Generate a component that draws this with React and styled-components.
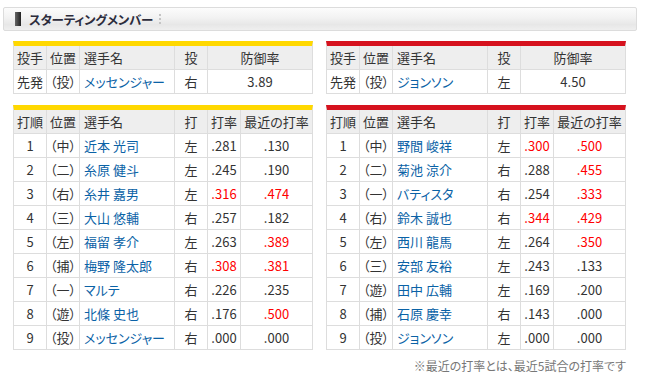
import styled, { createGlobalStyle } from 'styled-components';

const GlobalStyle = createGlobalStyle`
    html, body {
        margin: 0;
        padding: 0;
        background: #fff;
    }
    body {
        font-family: "Noto Sans CJK JP", "Noto Sans", sans-serif;
        font-feature-settings: "palt";
        color: #333;
    }
`;

const Page = styled.div`
    width: 634px;
    padding: 7px 0 0 3px;
`;

const SectionHead = styled.div`
    height: 24px;
    box-sizing: border-box;
    border: 1px solid #dcdcdc;
    border-radius: 2px;
    background: linear-gradient(to bottom, #fcfcfc 0%, #f2f2f2 45%, #e7e7e7 75%, #efefef 100%);
    display: flex;
    align-items: center;
    padding-left: 11px;
`;

const HeadMark = styled.span`
    width: 6px;
    height: 14px;
    background: linear-gradient(to right, #666, #222);
    margin-right: 8px;
`;

const HeadTitle = styled.span`
    font-size: 12.5px;
    font-weight: 700;
    color: #2c2c3c;
    letter-spacing: -0.2px;
`;

const HeadDots = styled.span`
    width: 0;
    height: 10px;
    border-left: 2px dotted #c4c4c4;
    margin-left: 6px;
`;

const Body = styled.div`
    padding: 10px 10px 0 10px;
`;

const Pair = styled.div`
    display: grid;
    grid-template-columns: 300px 300px;
    column-gap: 13px;
    margin-bottom: 11px;
`;

const Table = styled.div`
    border: 1px solid #dddddd;
    border-top: 5px solid ${(p) => (p.$team === 'tigers' ? '#ffd800' : '#d6121e')};
`;

const Row = styled.div`
    display: grid;
    grid-template-columns: ${(p) => p.$cols};
    height: 24px;
    box-sizing: border-box;
    border-bottom: 1px solid #dddddd;
    background: ${(p) => (p.$head ? '#eeeeee' : '#ffffff')};

    &:last-child {
        border-bottom: none;
        height: 23px;
    }
`;

const Cell = styled.div`
    display: flex;
    align-items: center;
    justify-content: ${(p) => (p.$left ? 'flex-start' : 'center')};
    padding-left: ${(p) => (p.$left ? '4px' : '0')};
    border-right: 1px solid #dddddd;
    font-size: 13px;
    white-space: nowrap;
    overflow: hidden;
    color: ${(p) => (p.$red ? '#ff0000' : p.$name ? '#0a62a6' : '#333')};

    &:last-child {
        border-right: none;
    }
`;

const Note = styled.div`
    text-align: right;
    font-size: 12px;
    color: #777;
    margin-top: -4px;
    padding-right: 1px;
`;

const PITCH_COLS = '33px 33px 95px 33px 1fr';
const BAT_COLS = '33px 33px 95px 33px 33px 1fr';

const pitchers = [
    { team: 'tigers', name: 'メッセンジャー', hand: '右', era: '3.89' },
    { team: 'carp', name: 'ジョンソン', hand: '左', era: '4.50' },
];

const lineups = [
    {
        team: 'tigers',
        rows: [
            ['1', '（中）', '近本 光司', '左', '.281', '.130'],
            ['2', '（二）', '糸原 健斗', '左', '.245', '.190'],
            ['3', '（右）', '糸井 嘉男', '左', '.316', '.474'],
            ['4', '（三）', '大山 悠輔', '右', '.257', '.182'],
            ['5', '（左）', '福留 孝介', '左', '.263', '.389'],
            ['6', '（捕）', '梅野 隆太郎', '右', '.308', '.381'],
            ['7', '（一）', 'マルテ', '右', '.226', '.235'],
            ['8', '（遊）', '北條 史也', '右', '.176', '.500'],
            ['9', '（投）', 'メッセンジャー', '右', '.000', '.000'],
        ],
    },
    {
        team: 'carp',
        rows: [
            ['1', '（中）', '野間 峻祥', '左', '.300', '.500'],
            ['2', '（二）', '菊池 涼介', '右', '.288', '.455'],
            ['3', '（一）', 'バティスタ', '右', '.254', '.333'],
            ['4', '（右）', '鈴木 誠也', '右', '.344', '.429'],
            ['5', '（左）', '西川 龍馬', '左', '.264', '.350'],
            ['6', '（三）', '安部 友裕', '左', '.243', '.133'],
            ['7', '（遊）', '田中 広輔', '左', '.169', '.200'],
            ['8', '（捕）', '石原 慶幸', '右', '.143', '.000'],
            ['9', '（投）', 'ジョンソン', '左', '.000', '.000'],
        ],
    },
];

// 3割以上は赤字
const isHot = (v) => parseFloat(v) >= 0.3;

function PitcherTable({ team, name, hand, era }) {
    return (
        <Table $team={team}>
            <Row $cols={PITCH_COLS} $head>
                <Cell>投手</Cell>
                <Cell>位置</Cell>
                <Cell $left>選手名</Cell>
                <Cell>投</Cell>
                <Cell>防御率</Cell>
            </Row>
            <Row $cols={PITCH_COLS}>
                <Cell>先発</Cell>
                <Cell>（投）</Cell>
                <Cell $left $name>{name}</Cell>
                <Cell>{hand}</Cell>
                <Cell>{era}</Cell>
            </Row>
        </Table>
    );
}

function BattingTable({ team, rows }) {
    return (
        <Table $team={team}>
            <Row $cols={BAT_COLS} $head>
                <Cell>打順</Cell>
                <Cell>位置</Cell>
                <Cell $left>選手名</Cell>
                <Cell>打</Cell>
                <Cell>打率</Cell>
                <Cell>最近の打率</Cell>
            </Row>
            {rows.map(([order, pos, name, hand, avg, recent]) => (
                <Row $cols={BAT_COLS} key={order}>
                    <Cell>{order}</Cell>
                    <Cell>{pos}</Cell>
                    <Cell $left $name>{name}</Cell>
                    <Cell>{hand}</Cell>
                    <Cell $red={isHot(avg)}>{avg}</Cell>
                    <Cell $red={isHot(recent)}>{recent}</Cell>
                </Row>
            ))}
        </Table>
    );
}

function App() {
    return (
        <>
            <GlobalStyle />
            <Page>
                <SectionHead>
                    <HeadMark />
                    <HeadTitle>スターティングメンバー</HeadTitle>
                    <HeadDots />
                </SectionHead>
                <Body>
                    <Pair>
                        {pitchers.map((p) => (
                            <PitcherTable key={p.team} {...p} />
                        ))}
                    </Pair>
                    <Pair>
                        {lineups.map((l) => (
                            <BattingTable key={l.team} {...l} />
                        ))}
                    </Pair>
                    <Note>※最近の打率とは、最近5試合の打率です</Note>
                </Body>
            </Page>
        </>
    );
}

export default App;
